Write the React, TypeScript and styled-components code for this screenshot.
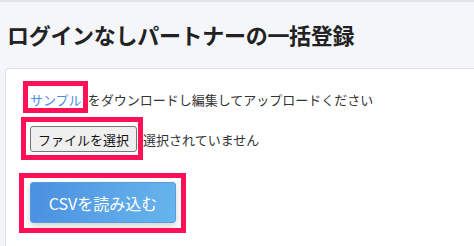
import * as React from 'react';
import styled, { createGlobalStyle } from 'styled-components';

const GlobalStyle = createGlobalStyle`
  html, body {
    margin: 0;
    padding: 0;
    background: #f5f6fa;
    overflow: hidden;
  }
  body {
    font-family: 'Noto Sans CJK JP', 'Noto Sans', sans-serif;
    color: #333;
  }
`;

const TopBar = styled.div`
  height: 2px;
  background: #e2e4e9;
`;

const Page = styled.div`
  padding: 0 0 0 5px;
`;

const Title = styled.h1`
  margin: 16px 0 0 2px;
  font-size: 22px;
  line-height: 33px;
  font-weight: 700;
  color: #222;
  letter-spacing: -0.3px;
`;

const Card = styled.div`
  margin-top: 17px;
  margin-right: -20px;
  min-height: 200px;
  background: #fff;
  border: 1px solid #dfe1e6;
  border-radius: 4px;
  padding: 21px 24px;
`;

const Line = styled.div`
  font-size: 13px;
  line-height: 20px;
  color: #333;
`;

const Highlight = styled.span<{ $t: number; $r: number; $b: number; $l: number }>`
  position: relative;
  display: inline-block;

  &::after {
    content: '';
    position: absolute;
    top: ${(p) => p.$t}px;
    right: ${(p) => p.$r}px;
    bottom: ${(p) => p.$b}px;
    left: ${(p) => p.$l}px;
    border: 5px solid #ff1157;
    pointer-events: none;
  }
`;

const SampleLink = styled.a`
  color: #4a90e2;
  text-decoration: none;
  margin-right: 6px;
`;

const FileRow = styled.div`
  display: flex;
  align-items: center;
  margin-top: 16px;
  font-size: 13px;
  color: #333;
`;

const FileButton = styled.button`
  height: 26px;
  padding: 0 7px;
  font-family: inherit;
  font-size: 13px;
  color: #111;
  background: #efefef;
  border: 1px solid #767676;
  border-radius: 3px;
`;

const FileStatus = styled.span`
  margin-left: 6px;
`;

const ImportButton = styled.button`
  width: 146px;
  height: 41px;
  font-family: inherit;
  font-size: 16px;
  color: #fff;
  background: linear-gradient(100deg, #4a8fe1 0%, #5ea9e8 65%, #66b5ec 100%);
  border: 1px solid #5a9be2;
  border-radius: 3px;
  box-shadow: 0 3px 7px rgba(0, 0, 0, 0.18);
`;

const ButtonRow = styled.div`
  margin-top: 30px;
`;

export default function App() {
  return (
    <>
      <GlobalStyle />
      <TopBar />
      <Page>
        <Title>ログインなしパートナーの一括登録</Title>
        <Card>
          <Line>
            <Highlight $t={-9} $r={0} $b={-3} $l={-7}>
              <SampleLink href="#">サンプル</SampleLink>
            </Highlight>
            をダウンロードし編集してアップロードください
          </Line>
          <FileRow>
            <Highlight $t={-9} $r={-6} $b={-8} $l={-9}>
              <FileButton>ファイルを選択</FileButton>
            </Highlight>
            <FileStatus>選択されていません</FileStatus>
          </FileRow>
          <ButtonRow>
            <Highlight $t={-9} $r={-10} $b={-10} $l={-11}>
              <ImportButton>CSVを読み込む</ImportButton>
            </Highlight>
          </ButtonRow>
        </Card>
      </Page>
    </>
  );
}
